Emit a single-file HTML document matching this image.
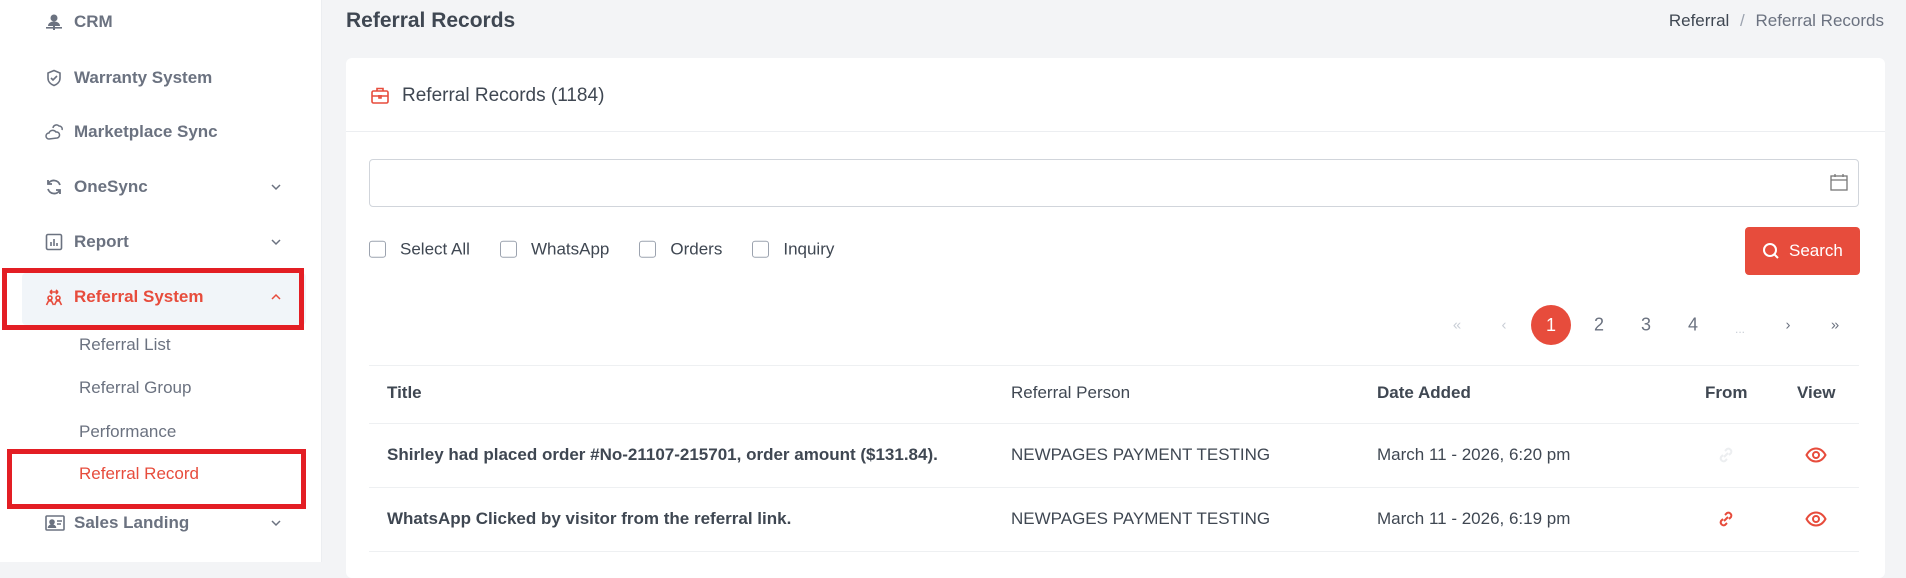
<!DOCTYPE html>
<html><head><meta charset="utf-8"><style>
*{margin:0;padding:0;box-sizing:border-box}
body{width:1906px;height:562px;overflow:hidden;background:#f3f4f6;font-family:"Liberation Sans",Arial,sans-serif;position:relative;color:#3f4752}
.a{position:absolute;white-space:nowrap}
#side{position:absolute;left:0;top:0;width:322px;height:562px;background:#fff;border-right:1px solid #eceef1}
.mi{position:absolute;left:74px;font-size:17px;font-weight:bold;color:#6b7280;transform:translateY(-50%)}
.ic{position:absolute;left:45px;width:18px;height:18px;transform:translateY(-50%)}
.chev{position:absolute;left:270px;transform:translateY(-50%)}
.sub{position:absolute;left:79px;font-size:17px;color:#6b7280;transform:translateY(-50%)}
.card{position:absolute;left:346px;top:58px;width:1539px;height:520px;background:#fff;border-radius:6px}
.cb{display:inline-block;width:17px;height:17px;border:1.5px solid #9ca3af;border-radius:3px;vertical-align:middle}
.pg{position:absolute;top:325px;transform:translate(-50%,-50%);font-size:18px;color:#6b7280}
.th{position:absolute;top:393px;transform:translateY(-50%);font-size:17px;font-weight:bold;color:#3f4752}
.td{position:absolute;transform:translateY(-50%);font-size:17px;color:#3f4752}
.hl{position:absolute;left:369px;width:1490px;height:1px;background:#eef0f2}
</style></head><body>
<div id="side">
 <svg class="ic" style="top:22px" viewBox="0 0 18 18" fill="#6b7280"><circle cx="9" cy="5" r="3.5"/><path d="M3 13c0-3 3-4.5 6-4.5s6 1.5 6 4.5z"/><rect x="1" y="14" width="16" height="1.6"/><rect x="8" y="13" width="2" height="4"/></svg>
 <div class="mi" style="top:22px">CRM</div>
 <svg class="ic" style="top:78px" viewBox="0 0 18 18" fill="none" stroke="#6b7280" stroke-width="1.6"><path d="M9 1.5l6 2.5v5c0 4-3 6.5-6 7.5-3-1-6-3.5-6-7.5V4z"/><path d="M6 9l2 2 4-4"/></svg>
 <div class="mi" style="top:78px">Warranty System</div>
 <svg class="ic" style="top:132px" viewBox="0 0 18 18" fill="none" stroke="#6b7280" stroke-width="1.5"><path d="M4 16a3 3 0 010-6 4 4 0 017-1 3 3 0 011 6z"/><path d="M8 5a3.5 3.5 0 016-2 3 3 0 013 4"/></svg>
 <div class="mi" style="top:132px">Marketplace Sync</div>
 <svg class="ic" style="top:187px" viewBox="0 0 18 18" fill="none" stroke="#6b7280" stroke-width="1.8"><path d="M15 7A6.5 6.5 0 003 6"/><path d="M3 11a6.5 6.5 0 0012 1"/><path d="M3 2v4h4M15 16v-4h-4"/></svg>
 <div class="mi" style="top:187px">OneSync</div>
 <svg class="chev" style="top:187px" width="12" height="8" viewBox="0 0 12 8"><path d="M2 2l4 4 4-4" stroke="#6b7280" stroke-width="1.5" fill="none"/></svg>
 <svg class="ic" style="top:242px" viewBox="0 0 18 18" fill="none" stroke="#6b7280" stroke-width="1.6"><rect x="1.5" y="1.5" width="15" height="15" rx="1.5"/><path d="M6 13V9M9 13V6M12 13V10"/></svg>
 <div class="mi" style="top:242px">Report</div>
 <svg class="chev" style="top:242px" width="12" height="8" viewBox="0 0 12 8"><path d="M2 2l4 4 4-4" stroke="#6b7280" stroke-width="1.5" fill="none"/></svg>
 <div class="a" style="left:22px;top:273px;width:284px;height:52px;background:#f1f5f9;border-radius:4px"></div>
 <div class="a" style="left:2px;top:268px;width:302px;height:62px;border:5px solid #e31e24"></div>
 <svg class="ic" style="top:297px" viewBox="0 0 18 18" fill="none" stroke="#e74c3c" stroke-width="1.6"><circle cx="5" cy="10" r="2"/><circle cx="13" cy="10" r="2"/><path d="M1.5 17l2-4h3l2 4M9.5 17l2-4h3l2 4M5 4h8M5 4l2-2M5 4l2 2M13 4l-2-2M13 4l-2 2"/></svg>
 <div class="mi" style="top:297px;color:#e74c3c">Referral System</div>
 <svg class="chev" style="top:297px" width="12" height="8" viewBox="0 0 12 8"><path d="M2 6l4-4 4 4" stroke="#e74c3c" stroke-width="1.5" fill="none"/></svg>
 <div class="sub" style="top:345px">Referral List</div>
 <div class="sub" style="top:388px">Referral Group</div>
 <div class="sub" style="top:432px">Performance</div>
 <div class="a" style="left:7px;top:449px;width:299px;height:60px;border:5px solid #e31e24"></div>
 <div class="sub" style="top:474px;color:#e74c3c">Referral Record</div>
 <svg class="ic" style="top:523px;width:20px" viewBox="0 0 20 18" fill="none" stroke="#6b7280" stroke-width="1.6"><rect x="1" y="2" width="18" height="14" rx="1"/><circle cx="7" cy="8" r="2" fill="#6b7280"/><path d="M3.5 14c0-2 2-3 3.5-3s3.5 1 3.5 3" fill="#6b7280"/><path d="M12 7h5M12 10h4"/></svg>
 <div class="mi" style="top:523px">Sales Landing</div>
 <svg class="chev" style="top:523px" width="12" height="8" viewBox="0 0 12 8"><path d="M2 2l4 4 4-4" stroke="#6b7280" stroke-width="1.5" fill="none"/></svg>
</div>

<div class="a" style="left:346px;top:21px;transform:translateY(-50%);font-size:21px;font-weight:bold;color:#3f4752">Referral Records</div>
<div class="a" style="right:22px;top:21px;transform:translateY(-50%);font-size:17px;color:#3f4752">Referral <span style="color:#9ca3af;margin:0 6px">/</span> <span style="color:#6b7280">Referral Records</span></div>

<div class="card"></div>
<svg class="a" style="left:371px;top:87px" width="18" height="17" viewBox="0 0 18 17" fill="none" stroke="#e74c3c" stroke-width="1.6"><rect x="1" y="4" width="16" height="12" rx="1.5"/><path d="M6 4V1.5h6V4M1 9h16M8 8v3h2V8"/></svg>
<div class="a" style="left:402px;top:96px;transform:translateY(-50%);font-size:19px;color:#3f4752">Referral Records (1184)</div>
<div class="a" style="left:346px;top:131px;width:1539px;height:1px;background:#eceef1"></div>

<div class="a" style="left:369px;top:159px;width:1490px;height:48px;border:1px solid #d1d5db;border-radius:4px"></div>
<svg class="a" style="left:1830px;top:174px" width="18" height="17" viewBox="0 0 18 17" fill="none" stroke="#777" stroke-width="1.3"><rect x="1" y="2" width="16" height="14"/><path d="M1 6h16M5 0v3M13 0v3"/></svg>

<div class="a" style="left:369px;top:249px;transform:translateY(-50%);font-size:17px;color:#3f4752">
<span class="cb"></span><span style="margin:0 30px 0 14px;vertical-align:middle">Select All</span><span class="cb"></span><span style="margin:0 30px 0 14px;vertical-align:middle">WhatsApp</span><span class="cb"></span><span style="margin:0 30px 0 14px;vertical-align:middle">Orders</span><span class="cb"></span><span style="margin:0 0 0 14px;vertical-align:middle">Inquiry</span></div>

<div class="a" style="left:1745px;top:227px;width:115px;height:48px;background:#e74c3c;border-radius:4px;color:#fff;font-size:17px;line-height:48px;padding-left:44px">Search</div>
<svg class="a" style="left:1762px;top:242px" width="18" height="18" viewBox="0 0 18 18" fill="none" stroke="#fff" stroke-width="2"><circle cx="8" cy="8" r="6"/><path d="M12.5 12.5L16 16"/></svg>

<div class="pg" style="left:1457px;color:#c9ced6;font-size:15px">«</div>
<div class="pg" style="left:1504px;color:#c9ced6;font-size:15px">‹</div>
<div class="a" style="left:1531px;top:305px;width:40px;height:40px;border-radius:50%;background:#e74c3c;color:#fff;font-size:18px;line-height:40px;text-align:center">1</div>
<div class="pg" style="left:1599px">2</div>
<div class="pg" style="left:1646px">3</div>
<div class="pg" style="left:1693px">4</div>
<div class="pg" style="left:1740px;color:#c9ced6;font-size:12px;top:329px">...</div>
<div class="pg" style="left:1788px;font-size:15px">›</div>
<div class="pg" style="left:1835px;font-size:15px">»</div>

<div class="hl" style="top:365px"></div>
<div class="th" style="left:387px">Title</div>
<div class="th" style="left:1011px;font-weight:normal">Referral Person</div>
<div class="th" style="left:1377px">Date Added</div>
<div class="th" style="left:1705px">From</div>
<div class="th" style="left:1797px">View</div>
<div class="hl" style="top:423px"></div>
<div class="td" style="left:387px;top:455px;font-weight:bold;font-size:17px">Shirley had placed order #No-21107-215701, order amount ($131.84).</div>
<div class="td" style="left:1011px;top:455px">NEWPAGES PAYMENT TESTING</div>
<div class="td" style="left:1377px;top:455px">March 11 - 2026, 6:20 pm</div>
<div class="hl" style="top:487px"></div>
<div class="td" style="left:387px;top:519px;font-weight:bold;font-size:17px">WhatsApp Clicked by visitor from the referral link.</div>
<div class="td" style="left:1011px;top:519px">NEWPAGES PAYMENT TESTING</div>
<div class="td" style="left:1377px;top:519px">March 11 - 2026, 6:19 pm</div>
<div class="hl" style="top:551px"></div>

<svg class="a" style="left:1716px;top:445px" width="20" height="20" viewBox="0 0 20 20" fill="none" stroke="#eceef0" stroke-width="2"><path d="M8 12l4-4M9 6l2-2a3 3 0 014 4l-2 2M11 14l-2 2a3 3 0 01-4-4l2-2"/></svg>
<svg class="a" style="left:1716px;top:509px" width="20" height="20" viewBox="0 0 20 20" fill="none" stroke="#e74c3c" stroke-width="2"><path d="M8 12l4-4M9 6l2-2a3 3 0 014 4l-2 2M11 14l-2 2a3 3 0 01-4-4l2-2"/></svg>
<svg class="a" style="left:1805px;top:447px" width="22" height="16" viewBox="0 0 22 16" fill="none" stroke="#e74c3c" stroke-width="2"><path d="M1.5 8C4 3.5 7.5 1.5 11 1.5S18 3.5 20.5 8C18 12.5 14.5 14.5 11 14.5S4 12.5 1.5 8z"/><circle cx="11" cy="8" r="3"/></svg>
<svg class="a" style="left:1805px;top:511px" width="22" height="16" viewBox="0 0 22 16" fill="none" stroke="#e74c3c" stroke-width="2"><path d="M1.5 8C4 3.5 7.5 1.5 11 1.5S18 3.5 20.5 8C18 12.5 14.5 14.5 11 14.5S4 12.5 1.5 8z"/><circle cx="11" cy="8" r="3"/></svg>
</body></html>
